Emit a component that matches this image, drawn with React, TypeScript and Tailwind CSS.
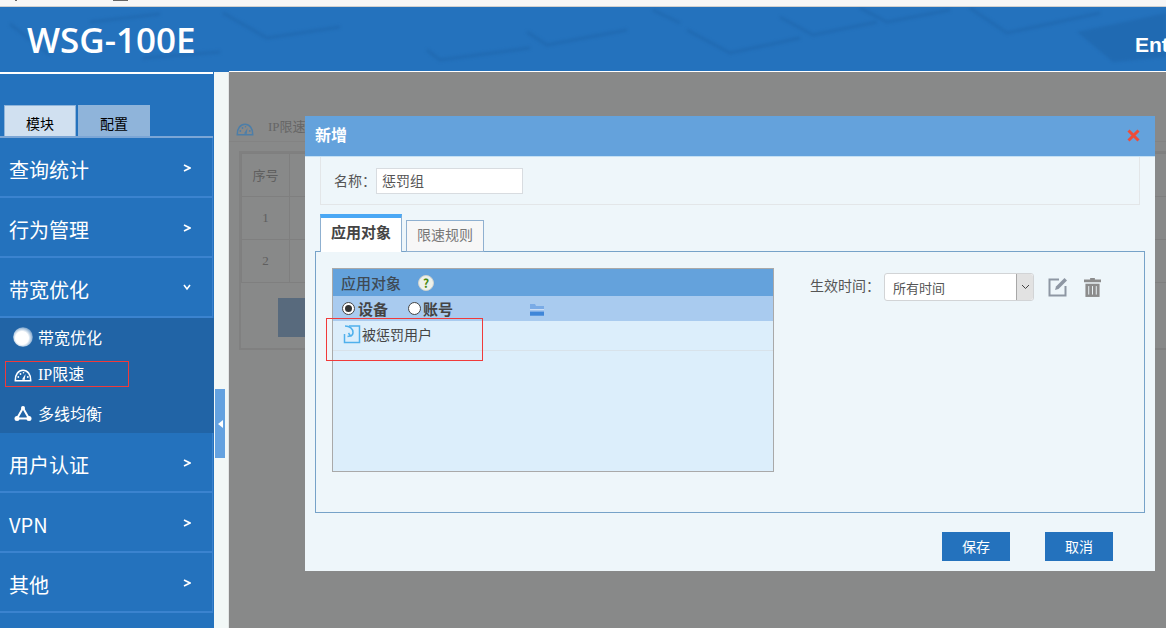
import React from "react";

const cjk = "font-['Noto_Sans_CJK_SC','Noto_Sans',sans-serif]";
const simsun = "font-['Liberation_Serif','Noto_Sans_CJK_SC',serif]";

function Chevron({ down }: { down?: boolean }) {
  return (
    <svg className={down ? "" : "mt-[1px]"} width="8" height="8" viewBox="0 0 8 8" fill="none" stroke="#fff" strokeWidth="1.6">
      {down ? <path d="M1 2l3 4 3-4" /> : <path d="M1 1l6 3-6 3" />}
    </svg>
  );
}

function Gauge({ color = "#fff" }: { color?: string }) {
  return (
    <svg width="18" height="13" viewBox="0 0 18 13" fill="none">
      <path d="M1.300 11.700C.8 5.600 4.500 1.200 9 1.200s8.200 4.400 7.700 10.500z" stroke={color} strokeWidth="1.600" />
      <path d="M8 10.500l3.500-5.500-.8 6z" fill={color} />
      <circle cx="4.300" cy="8" r=".9" fill={color} />
      <circle cx="6.500" cy="5" r=".9" fill={color} />
      <circle cx="9.500" cy="3.800" r=".8" fill={color} />
      <circle cx="13.800" cy="8" r=".9" fill={color} />
    </svg>
  );
}

function MenuHead({ label, down }: { label: string; down?: boolean }) {
  return (
    <div className="h-[60px] mr-px border-b-2 border-r border-[#3b83cf] flex items-center justify-between pl-[9px] pr-[21px] bg-[#2472bd]">
      <span className="text-[20px] text-white leading-none pt-[5px]">{label}</span>
      <Chevron down={down} />
    </div>
  );
}

function Sub({ icon, label, boxed }: { icon: React.ReactNode; label: string; boxed?: boolean }) {
  return (
    <div className={"h-[38px] flex items-center pl-[13px] text-[16px] text-white relative " + (boxed ? simsun : "")}>
      <span className="w-[20px] flex justify-center mr-[5px]">{icon}</span>
      <span className="leading-none">{label}</span>
      {boxed && <span className="absolute left-[5px] top-[5px] w-[124px] h-[26px] border border-[#f03a3a]" />}
    </div>
  );
}

function Sidebar() {
  return (
    <aside className="w-[214px] shrink-0 bg-[#2472bd] flex flex-col">
      <div className="h-[2px] bg-white mr-px" />
      <div className="h-[32px] mt-[30px] flex items-end gap-[2px] pl-[4px] mr-px">
        <div className="w-[72px] h-[31px] bg-[#d0e0f0] border border-b-0 border-[#8fb4da] text-[14px] text-black flex items-center justify-center pt-[5px]">模块</div>
        <div className="w-[72px] h-[31px] bg-[#8fb4da] text-[14px] text-black flex items-center justify-center pt-[5px]">配置</div>
      </div>
      <div className="h-[2px] bg-[#7ba6d6] mr-px" />
      <MenuHead label="查询统计" />
      <MenuHead label="行为管理" />
      <MenuHead label="带宽优化" down />
      <div className="bg-[#2164a6] h-[115px] flex flex-col">
        <Sub
          label="带宽优化"
          icon={
            <svg width="20" height="20" viewBox="0 0 20 20">
              <defs>
                <radialGradient id="ball" cx="45%" cy="55%" r="55%">
                  <stop offset="60%" stopColor="#fff" />
                  <stop offset="100%" stopColor="#7fa6cc" />
                </radialGradient>
              </defs>
              <circle cx="10" cy="10" r="9.800" fill="url(#ball)" />
            </svg>
          }
        />
        <Sub label="IP限速" boxed icon={<Gauge />} />
        <Sub
          label="多线均衡"
          icon={
            <svg width="18" height="18" viewBox="0 0 18 18" fill="none" stroke="#fff" strokeWidth="2">
              <path d="M9 4L3 14.500h12z" />
              <circle cx="9" cy="4" r="2" fill="#fff" stroke="none" />
              <circle cx="3" cy="14.500" r="2.500" fill="#fff" stroke="none" />
              <circle cx="15" cy="14.500" r="2.500" fill="#fff" stroke="none" />
            </svg>
          }
        />
      </div>
      <MenuHead label="用户认证" />
      <MenuHead label="VPN" />
      <MenuHead label="其他" />
    </aside>
  );
}

function Splitter() {
  return (
    <div className="w-[15px] shrink-0 bg-[#f2f8f7] border-r border-[#e3e6e6] flex flex-col">
      <div className="mt-[317px] ml-px w-[10px] h-[69px] bg-[#64a2e0] flex items-center justify-center">
        <span className="w-0 h-0 border-y-[4px] border-y-transparent border-r-[5px] border-r-white" />
      </div>
    </div>
  );
}

function Background() {
  const cell = "border border-[#7f7f7f] text-center text-[#5f5f5f] text-[13px]";
  return (
    <main className="flex-1 -mt-px border-t border-white bg-[#888989] relative overflow-hidden">
      <div className="h-[70px] flex items-end pb-[5px] pl-[7px] gap-[14px] border-b border-[#838383]">
        <Gauge color="#4d7ea8" />
        <span className={"text-[13px] text-[#666] " + simsun}>IP限速</span>
      </div>
      <div className="ml-[10px] mt-[9px] mr-[-40px] border-2 border-[#808080] h-[199px]">
        <table className="w-full border-collapse">
          <tbody>
            <tr className="h-[43px]">
              <td className={cell + " w-[48px]"}>序号</td>
              <td className={cell} />
            </tr>
            <tr className="h-[43px]">
              <td className={cell + " " + simsun}>1</td>
              <td className={cell} />
            </tr>
            <tr className="h-[43px]">
              <td className={cell + " " + simsun}>2</td>
              <td className={cell} />
            </tr>
          </tbody>
        </table>
        <div className="ml-[37px] mt-[15px] w-[60px] h-[39px] bg-[#586a7d]" />
      </div>
    </main>
  );
}

function ListPanel() {
  return (
    <div className="w-[442px] h-[204px] border border-[#a9a9a9] bg-[#dceefb] flex flex-col">
      <div className="h-[27px] bg-[#64a2dc] flex items-center pl-[8px] gap-[17px]">
        <span className="text-[15px] font-medium text-[#3f4a55] leading-none">应用对象</span>
        <span className="w-[16px] h-[16px] rounded-full bg-[#eef1ea] border border-[#cfd3cf] text-[#4a8a10] text-[12px] font-bold flex items-center justify-center leading-none">?</span>
      </div>
      <div className="h-[25px] bg-[#a9cbef] flex items-center pl-[9px] text-[15px] font-bold text-[#444] leading-none relative">
        <span className="w-[13px] h-[13px] rounded-full border border-[#444] bg-white flex items-center justify-center mr-[3px]">
          <span className="w-[7px] h-[7px] rounded-full bg-[#333]" />
        </span>
        <span className="w-[50px]">设备</span>
        <span className="w-[13px] h-[13px] rounded-full border border-[#444] bg-white mr-[2px]" />
        <span>账号</span>
        <svg className="ml-[76px] mt-[3px]" width="16" height="12" viewBox="0 0 16 12">
          <path d="M1 0h5l1 2h8v10H1z" fill="#7aabe6" />
          <path d="M1 5h14v1.500H1z" fill="#fff" opacity=".6" />
          <path d="M1 8h14v3.500H1z" fill="#3f86d8" />
        </svg>
      </div>
      <div className="h-[30px] border-b border-[#d8e2ea] flex items-center pl-[10px] text-[14px] text-[#444] leading-none">
        <svg className="mb-[4px]" width="18" height="20" viewBox="0 0 18 20" fill="none" stroke="#4fb0ec" strokeWidth="1.500">
          <path d="M6 2H16.500V18.500H1.500V10" />
          <path d="M2 2c5 0 8 3 8 6.500 0 2-1 3-2.500 3.500" />
          <path d="M5.500 9l2 3-3 .5" />
        </svg>
        <span className="ml-px mb-[4px]">被惩罚用户</span>
      </div>
    </div>
  );
}

function Modal() {
  return (
    <div className="absolute left-[305px] top-[116px] w-[850px] h-[455px] bg-[#eef6fa] flex flex-col">
      <div className="h-[41px] shrink-0 bg-[#64a2dc] border-b border-[#c4e0f4] flex items-center justify-between pl-[10px] pr-[15px]">
        <span className="text-[16px] font-bold text-white leading-none pb-[4px]">新增</span>
        <svg className="mb-[2px]" width="13" height="13" viewBox="0 0 13 13" stroke="#ee4c3a" strokeWidth="3">
          <path d="M1.500 1.500l10 10M11.500 1.500l-10 10" />
        </svg>
      </div>
      <div className="h-[48px] shrink-0 mx-[15px] border border-t-0 border-[#e3e6e8] flex items-center pl-[13px] text-[14px] text-[#555]">
        <span className="w-[42px]">名称：</span>
        <div className="w-[147px] h-[26px] bg-white border border-[#d8dce0] pl-[5px] flex items-center text-[14px] text-[#555]">惩罚组</div>
      </div>
      <div className="flex items-end gap-[4px] ml-[15px] mt-[9px] h-[38px] shrink-0 relative z-10 mb-[-1px]">
        <div className="w-[82px] h-[38px] bg-white border-x border-[#8fb0d0] border-t-4 border-t-[#4aa8f5] text-[15px] font-bold text-[#444] flex items-center justify-center pb-[6px]">应用对象</div>
        <div className="w-[78px] h-[32px] bg-[#f7f7f7] border border-[#8fb0d0] text-[14px] text-[#777] flex items-center justify-center pb-[3px]">限速规则</div>
      </div>
      <div className="mx-[10px] h-[262px] shrink-0 border border-[#76a2c8] pt-[16px] pl-[16px] flex">
        <ListPanel />
        <div className="ml-[36px] mt-[5px] h-[28px] flex items-center text-[14px] text-[#555]">
          <span className="w-[74px] pb-[3px]">生效时间：</span>
          <div className="w-[150px] h-[28px] rounded-[3px] border border-[#d2d4d6] bg-white flex items-center">
            <span className="flex-1 pl-[8px] text-[13px] pt-[2px] text-[#555]">所有时间</span>
            <span className="w-[17px] h-full bg-[#e2e2e2] border-l border-[#a8a8a8] rounded-r-[3px] flex items-center justify-center">
              <svg width="9" height="6" viewBox="0 0 9 6" fill="none" stroke="#444">
                <path d="M1 1l3.500 3.500L8 1" />
              </svg>
            </span>
          </div>
          <svg className="ml-[14px]" width="20" height="20" viewBox="0 0 20 20" fill="none" stroke="#8e97a3" strokeWidth="2">
            <path d="M11 2.500H1.500v16h16V9" />
            <path d="M7 13l1-3.500L16.500 1 19 3.500 10.500 12z" fill="#8e97a3" stroke="none" />
          </svg>
          <svg className="ml-[16px]" width="17" height="21" viewBox="0 0 18 21">
            <path d="M6.500 2V.5h5V2H18v3H0V2z" fill="#8c8c8c" />
            <path d="M1.500 6.500h15V20.500h-15z" fill="#8c8c8c" />
            <path d="M5 9v9M9 9v9M13 9v9" stroke="#eef6fa" strokeWidth="1" />
          </svg>
        </div>
      </div>
      <div className="flex justify-end gap-[35px] pr-[42px] mt-[19px]">
        <button className="w-[68px] h-[29px] bg-[#2472bd] text-white text-[14px]">保存</button>
        <button className="w-[68px] h-[29px] bg-[#2472bd] text-white text-[14px]">取消</button>
      </div>
      <span className="absolute left-[21px] top-[202px] w-[157px] h-[43px] border border-[#f03a3a]" />
    </div>
  );
}

export default function App() {
  return (
    <div className={"relative w-[1166px] h-[628px] overflow-hidden bg-[#f6f6f6] flex flex-col " + cjk}>
      <div className="h-[7px] shrink-0 border-b border-[#d0d0d0] bg-[#f6f6f6] flex items-start">
        <span className="ml-[15px] w-[2px] h-px bg-[#666]" />
        <span className="ml-[96px] w-[15px] h-px bg-[#666]" />
      </div>
      <header className="h-[65px] shrink-0 bg-[#2472bd] relative overflow-hidden flex items-center justify-between pl-[27px]">
        <svg className="absolute inset-0 blur-[1.5px]" width="1166" height="65" viewBox="0 7 1166 65" fill="none" stroke="#1c5ea3" strokeWidth="3" strokeOpacity=".4">
          <path d="M10 24L50 55" />
          <path d="M90 22L160 14" />
          <path d="M223 13L267 38L340 27" />
          <path d="M143 58L220 52" />
          <path d="M427 50L440 60L530 48" />
          <path d="M527 32L547 45L627 30" />
          <path d="M653 10L680 23" />
          <path d="M687 30L730 53L800 38" />
          <path d="M780 17L813 35L877 22" />
          <path d="M860 8L887 22L950 10" />
          <path d="M970 8L1007 33L1100 13" />
          <path d="M1077 32L1113 62L1166 57V13L1077 32z" fill="#1c5ea3" fillOpacity=".4" stroke="none" />
        </svg>
        <span className="relative text-[35px] font-semibold text-white font-['Open_Sans',sans-serif] leading-none">WSG-100E</span>
        <span className="relative text-[21px] font-bold text-white font-['Liberation_Sans',sans-serif] w-[31px] overflow-hidden pt-[10px] whitespace-nowrap">Ent</span>
      </header>
      <div className="flex-1 flex min-h-0">
        <Sidebar />
        <Splitter />
        <Background />
      </div>
      <Modal />
    </div>
  );
}
